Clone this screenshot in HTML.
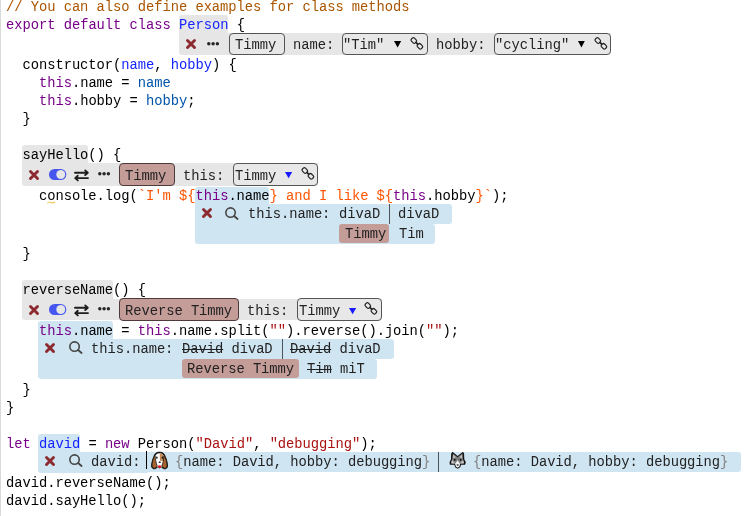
<!DOCTYPE html>
<html><head><meta charset="utf-8"><style>
*{margin:0;padding:0;box-sizing:border-box}
html,body{width:749px;height:516px;overflow:hidden;background:#fff}
#root{position:absolute;left:0;top:0;width:749px;height:516px;overflow:hidden;background:#fff}
.ln{position:absolute;white-space:pre;font-family:"Liberation Mono",monospace;font-size:13.8px;letter-spacing:-0.045px;line-height:18px;color:#000;will-change:transform}
.wt{color:#222}
.g{position:absolute;background:#e6e6e6}
.bl{position:absolute;background:#cfe5f2}
.btn{position:absolute;background:#e8e8e8;border:1px solid #555;border-radius:4px}
.brn{position:absolute;background:#c49c98;border:1px solid #4d3a3a;border-radius:4px}
.chip{position:absolute;background:#c49c98;border-radius:3px}
.sep{position:absolute;background:#4b5258;width:1px}
.k{color:#770088} .c{color:#aa5500} .d{color:#1424ff} .v2{color:#0055aa} .s{color:#aa1111} .s2{color:#ff5500}
.gr{color:#808080}
</style></head>
<body><div id="root">
<div class="g" style="left:0.00px;top:0.00px;width:1.20px;height:516.00px;background:#d9d9d9"></div>
<div class="g" style="left:178.90px;top:15.20px;width:49.10px;height:18.80px;border-radius:3px 3px 0 0"></div>
<div class="g" style="left:178.90px;top:33.20px;width:432.10px;height:21.80px;border-radius:0 0 3px 3px"></div>
<div class="ln" style="left:5.60px;top:-1.00px;"><span class="c">// You can also define examples for class methods</span></div>
<div class="ln" style="left:5.60px;top:17.00px;"><span class="k">export</span> <span class="k">default</span> <span class="k">class</span> <span class="d">Person</span> {</div>
<svg style="position:absolute;left:185.70px;top:39.00px;width:10px;height:10px;overflow:visible" viewBox="0 0 10 10"><path d="M1.5 1.5L8.5 8.5M8.5 1.5L1.5 8.5" stroke="#8c2a30" stroke-width="2.9" stroke-linecap="round"/></svg>
<svg style="position:absolute;left:206.80px;top:41.60px;width:12.4px;height:3.6px;overflow:visible" viewBox="0 0 12.4 3.6"><circle cx="1.8" cy="1.8" r="1.72" fill="#262626"/><circle cx="6.1" cy="1.8" r="1.72" fill="#262626"/><circle cx="10.4" cy="1.8" r="1.72" fill="#262626"/></svg>
<div class="btn" style="left:229.00px;top:33.00px;width:56.00px;height:22.00px;"></div>
<div class="ln wt" style="left:235.00px;top:37.00px;">Timmy</div>
<div class="ln wt" style="left:293.30px;top:37.00px;">name:</div>
<div class="btn" style="left:342.20px;top:33.00px;width:85.80px;height:22.00px;"></div>
<div class="ln wt" style="left:343.40px;top:37.00px;">"Tim"</div>
<svg style="position:absolute;left:393.80px;top:41.00px;width:7.2px;height:6.6px;overflow:visible" viewBox="0 0 7.2 6.6"><path d="M0 0H7.2L3.6 6.6Z" fill="#000"/></svg>
<svg style="position:absolute;left:410.10px;top:36.90px;width:14px;height:13px;overflow:visible" viewBox="0 0 14 13"><g fill="none" stroke="#222" stroke-width="1.2"><rect x="-2.7" y="-2.1" width="5.4" height="4.2" rx="1.5" transform="translate(3.8 3.5) rotate(45)"/><rect x="-2.7" y="-2.1" width="5.4" height="4.2" rx="1.5" transform="translate(9.9 9.3) rotate(45)"/><path d="M6.1 5.6L7.6 7.1" stroke-width="1.7" stroke-linecap="round"/></g></svg>
<div class="ln wt" style="left:436.30px;top:37.00px;">hobby:</div>
<div class="btn" style="left:494.00px;top:33.00px;width:117.00px;height:22.00px;"></div>
<div class="ln wt" style="left:494.90px;top:37.00px;">"cycling"</div>
<svg style="position:absolute;left:578.00px;top:40.80px;width:6.8px;height:6.6px;overflow:visible" viewBox="0 0 6.8 6.6"><path d="M0 0H6.8L3.4 6.6Z" fill="#000"/></svg>
<svg style="position:absolute;left:593.60px;top:36.70px;width:14px;height:13px;overflow:visible" viewBox="0 0 14 13"><g fill="none" stroke="#222" stroke-width="1.2"><rect x="-2.7" y="-2.1" width="5.4" height="4.2" rx="1.5" transform="translate(3.8 3.5) rotate(45)"/><rect x="-2.7" y="-2.1" width="5.4" height="4.2" rx="1.5" transform="translate(9.9 9.3) rotate(45)"/><path d="M6.1 5.6L7.6 7.1" stroke-width="1.7" stroke-linecap="round"/></g></svg>
<div class="ln" style="left:5.60px;top:57.00px;">  constructor(<span class="d">name</span>, <span class="d">hobby</span>) {</div>
<div class="ln" style="left:5.60px;top:75.00px;">    <span class="k">this</span>.name = <span class="v2">name</span></div>
<div class="ln" style="left:5.60px;top:93.00px;">    <span class="k">this</span>.hobby = <span class="v2">hobby</span>;</div>
<div class="ln" style="left:5.60px;top:111.00px;">  }</div>
<div class="g" style="left:22.20px;top:145.10px;width:65.80px;height:18.40px;border-radius:3px 3px 0 0"></div>
<div class="g" style="left:22.20px;top:163.30px;width:295.40px;height:22.40px;border-radius:0 0 3px 3px"></div>
<div class="ln" style="left:5.60px;top:147.00px;">  sayHello() {</div>
<svg style="position:absolute;left:28.90px;top:170.40px;width:10px;height:10px;overflow:visible" viewBox="0 0 10 10"><path d="M1.5 1.5L8.5 8.5M8.5 1.5L1.5 8.5" stroke="#8c2a30" stroke-width="2.9" stroke-linecap="round"/></svg>
<svg style="position:absolute;left:49.00px;top:169.10px;width:17.3px;height:11px;overflow:visible" viewBox="0 0 17.3 11"><rect x="0" y="0" width="17.3" height="11" rx="5.5" fill="#4657f0"/><circle cx="11.75" cy="5.5" r="4.45" fill="#e6e6e6"/></svg>
<svg style="position:absolute;left:73.70px;top:169.80px;width:15px;height:11px;overflow:visible" viewBox="0 0 15 11"><g fill="none" stroke="#1e1e1e" stroke-width="1.9" stroke-linecap="round" stroke-linejoin="round"><path d="M1 2.7H13.6M11.2 0.4L13.8 2.7L11.2 5"/><path d="M14 8.1H1.4M3.8 5.8L1.2 8.1L3.8 10.4"/></g></svg>
<svg style="position:absolute;left:97.60px;top:172.20px;width:12.4px;height:3.6px;overflow:visible" viewBox="0 0 12.4 3.6"><circle cx="1.8" cy="1.8" r="1.72" fill="#262626"/><circle cx="6.1" cy="1.8" r="1.72" fill="#262626"/><circle cx="10.4" cy="1.8" r="1.72" fill="#262626"/></svg>
<div class="brn" style="left:119.00px;top:163.00px;width:56.00px;height:23.00px;"></div>
<div class="ln wt" style="left:125.00px;top:168.00px;">Timmy</div>
<div class="ln wt" style="left:183.00px;top:168.00px;">this:</div>
<div class="btn" style="left:233.20px;top:163.00px;width:84.80px;height:23.00px;"></div>
<div class="ln wt" style="left:235.00px;top:168.00px;">Timmy</div>
<svg style="position:absolute;left:284.80px;top:172.40px;width:7.2px;height:6.3px;overflow:visible" viewBox="0 0 7.2 6.3"><path d="M0 0H7.2L3.6 6.3Z" fill="#1a1aff"/></svg>
<svg style="position:absolute;left:300.80px;top:167.20px;width:14px;height:13px;overflow:visible" viewBox="0 0 14 13"><g fill="none" stroke="#222" stroke-width="1.2"><rect x="-2.7" y="-2.1" width="5.4" height="4.2" rx="1.5" transform="translate(3.8 3.5) rotate(45)"/><rect x="-2.7" y="-2.1" width="5.4" height="4.2" rx="1.5" transform="translate(9.9 9.3) rotate(45)"/><path d="M6.1 5.6L7.6 7.1" stroke-width="1.7" stroke-linecap="round"/></g></svg>
<div class="bl" style="left:195.10px;top:186.50px;width:74.20px;height:18.50px;border-radius:3px 3px 0 0"></div>
<div class="bl" style="left:195.10px;top:204.30px;width:256.50px;height:19.70px;border-radius:0 3px 3px 0"></div>
<div class="bl" style="left:195.10px;top:223.80px;width:239.70px;height:20.20px;border-radius:0 3px 3px 3px"></div>
<div class="ln" style="left:5.60px;top:188.00px;">    console.log(<span class="s2">`I'm ${</span><span class="k">this</span>.name<span class="s2">} and I like ${</span><span class="k">this</span>.hobby<span class="s2">}`</span>);</div>
<svg style="position:absolute;left:46.80px;top:201.20px;width:8.4px;height:3px;overflow:visible" viewBox="0 0 8.4 3"><path d="M0.4 2.4Q2.1 0.2 4.2 1.5T8 0.6" fill="none" stroke="#f0c850" stroke-width="1.1"/></svg>
<svg style="position:absolute;left:202.30px;top:208.10px;width:10px;height:10px;overflow:visible" viewBox="0 0 10 10"><path d="M1.5 1.5L8.5 8.5M8.5 1.5L1.5 8.5" stroke="#8c2a30" stroke-width="2.9" stroke-linecap="round"/></svg>
<svg style="position:absolute;left:225.20px;top:206.50px;width:14px;height:13px;overflow:visible" viewBox="0 0 14 13"><g fill="none" stroke="#464646" stroke-width="1.6" stroke-linecap="round"><circle cx="5.55" cy="5.55" r="4.7"/><path d="M9.1 9.0L12.6 12.0" stroke-width="1.8"/></g></svg>
<div class="ln wt" style="left:247.90px;top:206.00px;">this.name:</div>
<div class="ln wt" style="left:339.20px;top:206.00px;">divaD</div>
<div class="sep" style="left:389.00px;top:204.30px;width:1.00px;height:19.50px;"></div>
<div class="ln wt" style="left:397.80px;top:206.00px;">divaD</div>
<div class="chip" style="left:339.00px;top:224.30px;width:50.00px;height:18.50px;"></div>
<div class="ln wt" style="left:345.00px;top:226.00px;">Timmy</div>
<div class="ln wt" style="left:398.80px;top:226.00px;">Tim</div>
<div class="ln" style="left:5.60px;top:246.00px;">  }</div>
<div class="g" style="left:22.20px;top:280.30px;width:90.50px;height:18.70px;border-radius:3px 3px 0 0"></div>
<div class="g" style="left:22.20px;top:298.50px;width:359.60px;height:21.80px;border-radius:0 0 3px 3px"></div>
<div class="ln" style="left:5.60px;top:282.00px;">  reverseName() {</div>
<svg style="position:absolute;left:28.90px;top:304.80px;width:10px;height:10px;overflow:visible" viewBox="0 0 10 10"><path d="M1.5 1.5L8.5 8.5M8.5 1.5L1.5 8.5" stroke="#8c2a30" stroke-width="2.9" stroke-linecap="round"/></svg>
<svg style="position:absolute;left:49.00px;top:303.90px;width:17.3px;height:11px;overflow:visible" viewBox="0 0 17.3 11"><rect x="0" y="0" width="17.3" height="11" rx="5.5" fill="#4657f0"/><circle cx="11.75" cy="5.5" r="4.45" fill="#e6e6e6"/></svg>
<svg style="position:absolute;left:73.70px;top:305.00px;width:15px;height:11px;overflow:visible" viewBox="0 0 15 11"><g fill="none" stroke="#1e1e1e" stroke-width="1.9" stroke-linecap="round" stroke-linejoin="round"><path d="M1 2.7H13.6M11.2 0.4L13.8 2.7L11.2 5"/><path d="M14 8.1H1.4M3.8 5.8L1.2 8.1L3.8 10.4"/></g></svg>
<svg style="position:absolute;left:97.60px;top:307.40px;width:12.4px;height:3.6px;overflow:visible" viewBox="0 0 12.4 3.6"><circle cx="1.8" cy="1.8" r="1.72" fill="#262626"/><circle cx="6.1" cy="1.8" r="1.72" fill="#262626"/><circle cx="10.4" cy="1.8" r="1.72" fill="#262626"/></svg>
<div class="brn" style="left:119.00px;top:298.00px;width:120.20px;height:23.00px;"></div>
<div class="ln wt" style="left:125.40px;top:303.00px;">Reverse Timmy</div>
<div class="ln wt" style="left:247.20px;top:303.00px;">this:</div>
<div class="btn" style="left:297.20px;top:298.00px;width:84.80px;height:23.00px;"></div>
<div class="ln wt" style="left:299.00px;top:303.00px;">Timmy</div>
<svg style="position:absolute;left:348.90px;top:307.60px;width:7.2px;height:6.3px;overflow:visible" viewBox="0 0 7.2 6.3"><path d="M0 0H7.2L3.6 6.3Z" fill="#1a1aff"/></svg>
<svg style="position:absolute;left:364.20px;top:302.40px;width:14px;height:13px;overflow:visible" viewBox="0 0 14 13"><g fill="none" stroke="#222" stroke-width="1.2"><rect x="-2.7" y="-2.1" width="5.4" height="4.2" rx="1.5" transform="translate(3.8 3.5) rotate(45)"/><rect x="-2.7" y="-2.1" width="5.4" height="4.2" rx="1.5" transform="translate(9.9 9.3) rotate(45)"/><path d="M6.1 5.6L7.6 7.1" stroke-width="1.7" stroke-linecap="round"/></g></svg>
<div class="bl" style="left:38.20px;top:321.20px;width:74.80px;height:18.80px;border-radius:3px 3px 0 0"></div>
<div class="bl" style="left:38.20px;top:339.30px;width:355.80px;height:19.70px;border-radius:0 3px 3px 0"></div>
<div class="bl" style="left:38.20px;top:358.80px;width:338.40px;height:20.20px;border-radius:0 3px 3px 3px"></div>
<div class="ln" style="left:5.60px;top:323.00px;">    <span class="k">this</span>.name = <span class="k">this</span>.name.split(<span class="s">""</span>).reverse().join(<span class="s">""</span>);</div>
<svg style="position:absolute;left:45.40px;top:342.90px;width:10px;height:10px;overflow:visible" viewBox="0 0 10 10"><path d="M1.5 1.5L8.5 8.5M8.5 1.5L1.5 8.5" stroke="#8c2a30" stroke-width="2.9" stroke-linecap="round"/></svg>
<svg style="position:absolute;left:68.60px;top:341.20px;width:14px;height:13px;overflow:visible" viewBox="0 0 14 13"><g fill="none" stroke="#464646" stroke-width="1.6" stroke-linecap="round"><circle cx="5.55" cy="5.55" r="4.7"/><path d="M9.1 9.0L12.6 12.0" stroke-width="1.8"/></g></svg>
<div class="ln wt" style="left:91.00px;top:341.00px;">this.name:</div>
<div class="ln wt" style="left:181.80px;top:341.00px;"><s>David</s> divaD</div>
<div class="sep" style="left:282.10px;top:339.30px;width:1.00px;height:19.70px;"></div>
<div class="ln wt" style="left:290.40px;top:341.00px;"><s>David</s> divaD</div>
<div class="chip" style="left:182.00px;top:359.20px;width:116.60px;height:18.80px;"></div>
<div class="ln wt" style="left:187.00px;top:361.00px;">Reverse Timmy</div>
<div class="ln wt" style="left:306.50px;top:361.00px;"><s>Tim</s> miT</div>
<div class="ln" style="left:5.60px;top:382.00px;">  }</div>
<div class="ln" style="left:5.60px;top:400.00px;">}</div>
<div class="bl" style="left:38.20px;top:434.30px;width:41.50px;height:18.20px;border-radius:3px 3px 0 0"></div>
<div class="bl" style="left:38.20px;top:452.00px;width:702.60px;height:20.00px;border-radius:0 3px 3px 3px"></div>
<div class="bl" style="left:38.20px;top:460.00px;width:110.80px;height:13.00px;border-radius:0 0 3px 3px"></div>
<div class="ln" style="left:5.60px;top:436.00px;"><span class="k">let</span> <span class="d">david</span> = <span class="k">new</span> Person(<span class="s">"David"</span>, <span class="s">"debugging"</span>);</div>
<svg style="position:absolute;left:45.30px;top:456.40px;width:10px;height:10px;overflow:visible" viewBox="0 0 10 10"><path d="M1.5 1.5L8.5 8.5M8.5 1.5L1.5 8.5" stroke="#8c2a30" stroke-width="2.9" stroke-linecap="round"/></svg>
<svg style="position:absolute;left:68.60px;top:454.30px;width:14px;height:13px;overflow:visible" viewBox="0 0 14 13"><g fill="none" stroke="#464646" stroke-width="1.6" stroke-linecap="round"><circle cx="5.55" cy="5.55" r="4.7"/><path d="M9.1 9.0L12.6 12.0" stroke-width="1.8"/></g></svg>
<div class="ln wt" style="left:91.20px;top:454.00px;">david:</div>
<div class="sep" style="left:146.00px;top:451.20px;width:1.00px;height:17.50px;background:#000"></div>
<svg style="position:absolute;left:149px;top:450px;width:21px;height:21px" viewBox="0 0 516 516"><path d="M258 52C180 52 132 95 118 165C95 210 62 320 62 392C62 440 100 468 140 462C180 456 200 428 222 408L258 440L296 408C318 428 338 456 378 462C418 468 458 440 456 392C456 320 425 210 400 165C386 95 336 52 258 52Z" fill="#111" stroke="#111" stroke-width="20"/><path d="M258 78C196 78 158 112 146 168C136 230 150 330 178 392C205 420 232 418 258 418C284 418 312 420 340 392C366 330 380 230 372 168C360 112 320 78 258 78Z" fill="#fff"/><path d="M268 80C320 84 356 112 368 170C372 210 368 250 356 280C330 270 292 272 272 266C266 200 264 130 268 80Z" fill="#c08a5a"/><path d="M140 140C105 200 72 310 74 390C76 432 104 452 138 448C170 442 192 420 204 396C175 330 158 230 150 150Z" fill="#a8642e" stroke="#111" stroke-width="18"/><path d="M378 140C413 200 446 310 444 390C442 432 414 452 380 448C348 442 326 420 314 396C343 330 360 230 368 150Z" fill="#a8642e" stroke="#111" stroke-width="18"/><ellipse cx="192" cy="190" rx="20" ry="28" fill="#111"/><ellipse cx="333" cy="190" rx="20" ry="28" fill="#111"/><ellipse cx="264" cy="300" rx="30" ry="18" fill="#111"/><path d="M222 392C235 372 288 372 300 392C310 418 292 440 262 440C232 440 212 418 222 392Z" fill="#e8121e"/></svg>
<div class="ln wt" style="left:175.00px;top:454.00px;"><span class="gr">{</span>name: David, hobby: debugging<span class="gr">}</span></div>
<div class="sep" style="left:438.00px;top:452.00px;width:1.00px;height:19.80px;"></div>
<svg style="position:absolute;left:447px;top:450px;width:21px;height:21px" viewBox="0 0 516 516"><path d="M135 45L260 150L395 45L420 90L425 225L462 300L445 362L345 360L325 425L262 462L200 425L180 360L72 362L62 300L98 225L102 90Z" fill="#111"/><path d="M145 85L258 180L382 85L392 230L420 300L410 330L325 330L300 410L262 430L222 410L200 330L108 330L98 300L125 230Z" fill="#7a7a7a"/><path d="M150 110L215 165L180 205L150 200Z" fill="#bdbdbd"/><path d="M372 110L305 165L340 205L372 200Z" fill="#bdbdbd"/><path d="M108 300L125 250L175 300L200 330L108 330Z" fill="#c8c8c8"/><path d="M410 300L395 250L345 300L325 330L410 330Z" fill="#c8c8c8"/><path d="M260 250L320 335L300 410L262 430L222 410L200 335Z" fill="#f4f4f4"/><ellipse cx="190" cy="240" rx="22" ry="26" fill="#111"/><ellipse cx="335" cy="240" rx="22" ry="26" fill="#111"/><ellipse cx="262" cy="368" rx="28" ry="18" fill="#222"/></svg>
<div class="ln wt" style="left:473.30px;top:454.00px;"><span class="gr">{</span>name: David, hobby: debugging<span class="gr">}</span></div>
<div class="ln" style="left:5.60px;top:475.00px;">david.reverseName();</div>
<div class="ln" style="left:5.60px;top:493.00px;">david.sayHello();</div>
</div></body></html>
